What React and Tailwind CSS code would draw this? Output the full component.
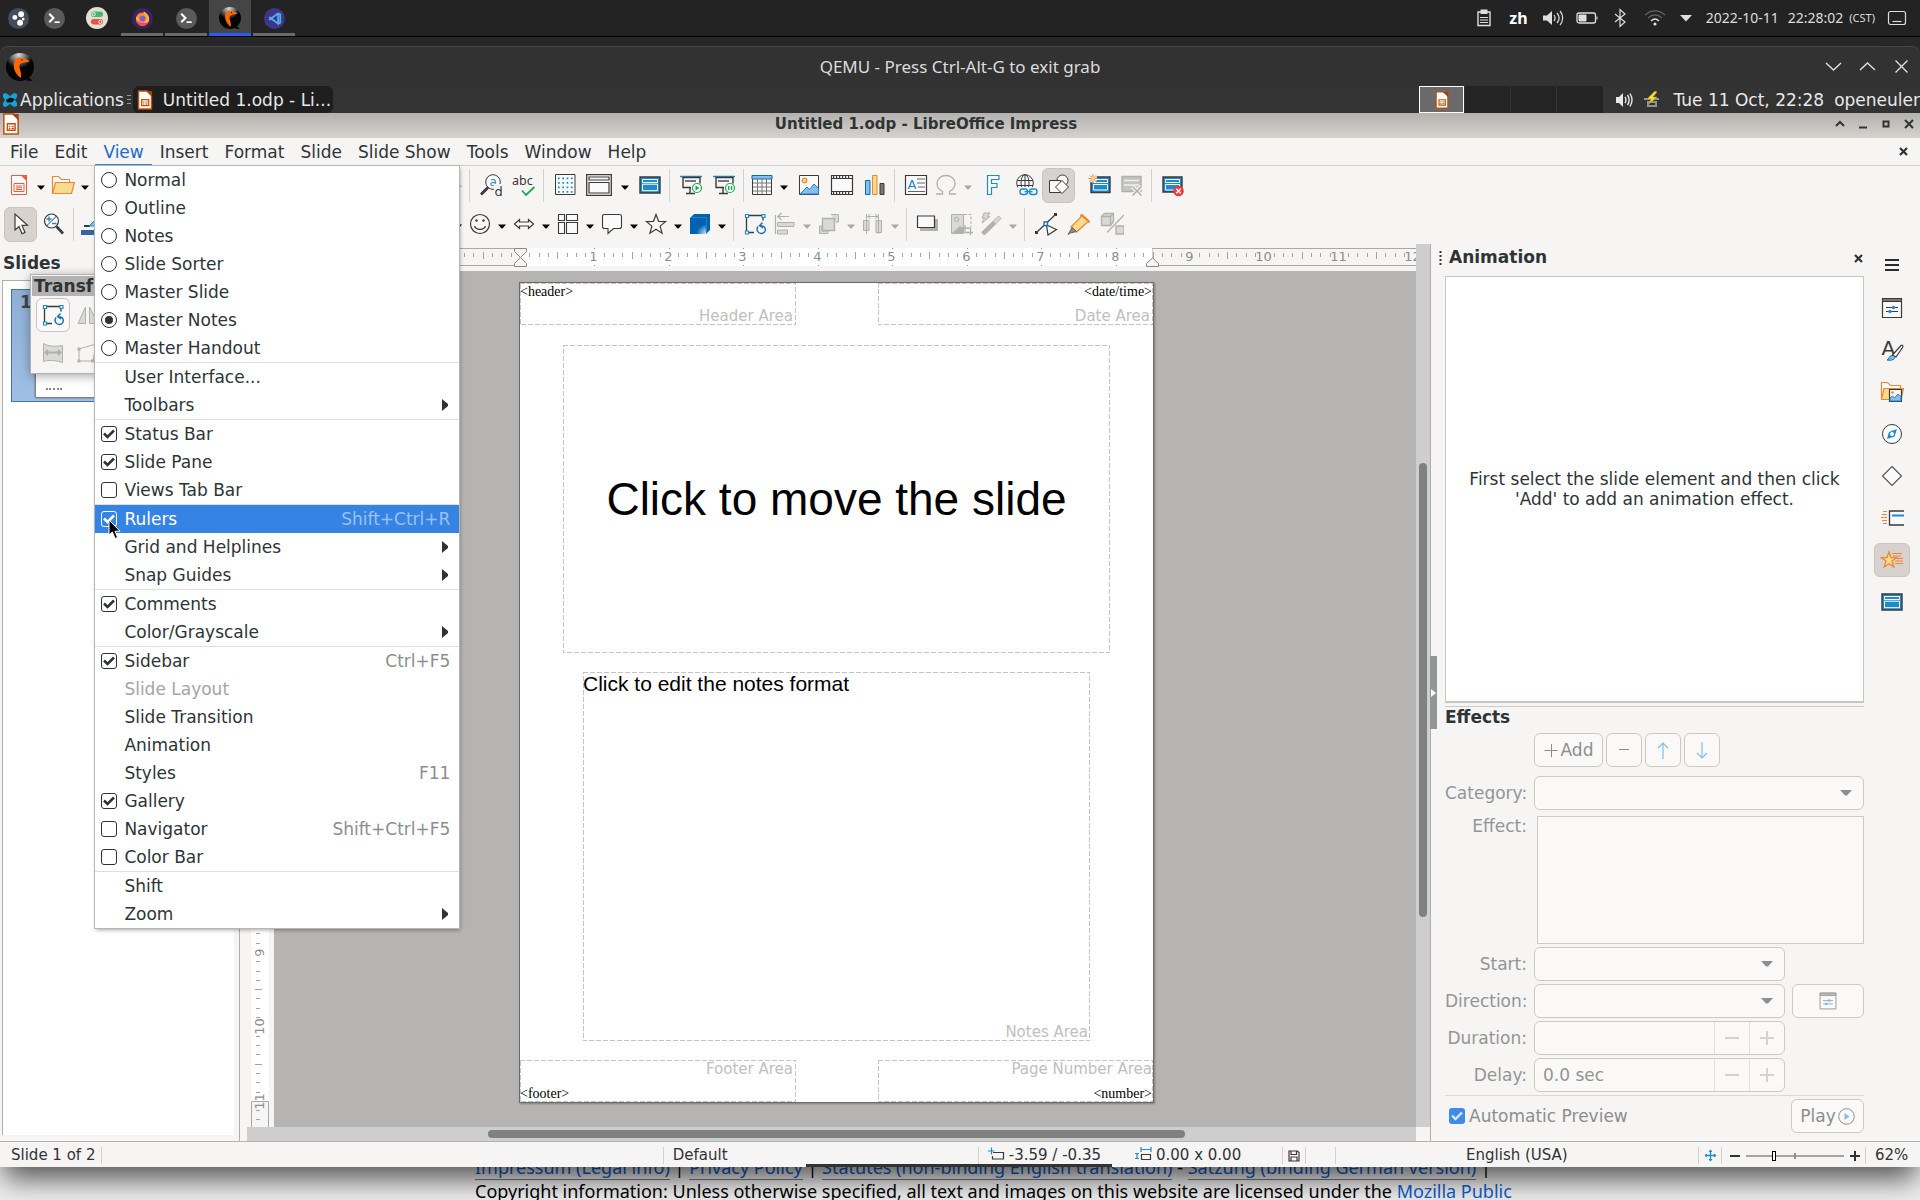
import React from "react";

const D = "#3a3a38";
const B = "#1e8bcd";
const LB = "#83beec";
const OR = "#ed8733";
const YE = "#f8db8f";
const WH = "#fafafa";
const GR = "#b0b0ae";
const LG = "#d9d9d7";
const GN = "#18ab50";

function Icon({ children, size = 24, box = 24, className = "" }) {
  return (
    <svg width={size} height={size} viewBox={`0 0 ${box} ${box}`} fill="none" className={`shrink-0 ${className}`} aria-hidden="true">
      {children}
    </svg>
  );
}

/* ---------- shared glyphs ---------- */

function ImpressDoc({ size = 20 }) {
  return (
    <Icon size={size} box={20}>
      <path d="M3.5 1h9l4 4v14h-13z" fill="#fff" stroke="#c0500c" strokeWidth="1.4" />
      <path d="M11 1h6v6z" fill="#a83f06" />
      <path d="M6.7 9.7h7v6h-7z" stroke="#c0500c" strokeWidth="1.3" />
      <path d="M8 12h1.4M10.4 12h2.2M8 14h1.4M10.4 14h2.2" stroke="#c0500c" />
    </Icon>
  );
}

function QemuLogo({ size }) {
  return (
    <Icon size={size} box={28}>
      <defs>
        <radialGradient id="qemu" cx=".45" cy=".05" r=".5">
          <stop offset="0" stopColor="#ddd" />
          <stop offset=".5" stopColor="#777" />
          <stop offset="1" stopColor="#050505" />
        </radialGradient>
      </defs>
      <circle cx="14" cy="14" r="14" fill="url(#qemu)" />
      <path d="M19 22l8 5.800h-6z" fill="#050505" />
      <path d="M8.500 8C10 4.500 15 4 18.500 5.500c1.500.9 2.200 1.300 4.500 2.200.4.600 0 1.100-1 1.200l-4 .6c-2.500.6-4.500 1.200-4.600 3.600-.2 3 2.400 5.500 1.600 12C10 22 6 15 8.500 8z" fill="#ff6600" />
      <circle cx="16" cy="7" r=".8" fill="#222" />
    </Icon>
  );
}

function Chevron({ color = "#000" }) {
  return (
    <svg width="8" height="5" viewBox="0 0 8 5" aria-hidden="true">
      <path d="M0 .5h8L4.500 4.500h-1z" fill={color} />
    </svg>
  );
}

const TransformShape = () => (
  <>
    <path d="M4 3.500h16v5M3.500 4v16M4 20.500h7" stroke={D} strokeWidth="1.3" />
    <path d="M2.500 2.500h3v3h-3zM19 2.500h3v3h-3zM2.500 19h3v3h-3z" fill="#fff" stroke={B} strokeWidth="1.2" />
    <path d="M15 14.500c-2 2.800-.6 6.800 3 7 3.400.1 5-2.800 4-5.500-.8-1.700-2.300-2.400-5-2.200M19.500 10.500l-3 3.200 3.600 2.300" stroke="#1a6fb5" strokeWidth="1.4" />
  </>
);

const MasterShape = () => (
  <>
    <path d="M2 4h20v16H2z" fill={B} stroke={D} strokeWidth="1.4" />
    <path d="M4.500 6.500h15v3h-15zM4.500 11.200h15v6.500h-15z" stroke="#fff" strokeWidth="1" />
  </>
);

/* ---------- toolbar icons ---------- */

const I = {
  newDoc: (
    <Icon>
      <path d="M4.500 2.500h11l4 4v15h-15z" fill={WH} stroke="#ef5a36" />
      <path d="M13.500 2h6.500v6.500z" fill="#ef5a36" />
      <path d="M7 10.500h10v8H7z" stroke="#ef5a36" />
      <path d="M9 13h6M9 14.800h6M9 16.500h6" stroke="#ef5a36" />
    </Icon>
  ),
  open: (
    <Icon>
      <path d="M1.500 20.500v-17h6l3 3h8v3" fill={WH} stroke={OR} strokeWidth="1.2" />
      <path d="M4.500 9.500h19l-3 11h-19z" fill={YE} stroke={OR} strokeWidth="1.2" />
    </Icon>
  ),
  find: (
    <Icon>
      <circle cx="14" cy="9" r="7.300" fill={WH} stroke={D} strokeWidth="1" />
      <path d="M9 14.500L2 21.500" stroke={D} strokeWidth="2.800" />
      <text x="10.500" y="13" fontSize="12" fontFamily="DejaVu Sans" fill={B}>a</text>
      <rect x="15" y="11" width="9" height="13" fill="#f6f5f4" />
      <text x="15.500" y="22.500" fontSize="13" fontFamily="DejaVu Sans" fill={D}>d</text>
    </Icon>
  ),
  abc: (
    <Icon>
      <text x="0" y="11.500" fontSize="12.500" fontFamily="Noto Sans" fill={D}>abc</text>
      <path d="M10 17.500l4 4.500L22.500 14" stroke={GN} strokeWidth="1.800" />
    </Icon>
  ),
  grid: (
    <Icon>
      <path d="M2.500 1.500h19.500v20H2.500z" fill={WH} stroke={D} />
      {[4.500, 9, 13.500, 18].map((y) => (
        <path key={y} d={`M5 ${y + 0.800}h15`} stroke={B} strokeWidth="1.700" strokeDasharray="1.700 2.600" />
      ))}
    </Icon>
  ),
  view: (
    <Icon size={26} box={26}>
      <path d="M.7 2.700h24.600v20.600H.7z" fill={WH} stroke={D} strokeWidth="1.300" />
      <path d="M3 5h20v3H3zM3 10.500h20V21H3z" stroke={D} strokeWidth="1.200" />
    </Icon>
  ),
  master: <Icon><MasterShape /></Icon>,
  play: (
    <Icon>
      <path d="M1 3.500h22" stroke={B} strokeWidth="1.500" />
      <path d="M12 14.500H4v-10h17v6M11 15v5M7 20.500h9" stroke={D} strokeWidth="1.400" />
      <path d="M6 8h11" stroke="#777" strokeWidth="2" />
      <circle cx="18" cy="15" r="4.500" fill={WH} stroke={GN} strokeWidth="1.200" />
      <path d="M16.500 12.500v5l4-2.500z" fill={GN} />
    </Icon>
  ),
  pause: (
    <Icon>
      <path d="M1 3.500h22" stroke={B} strokeWidth="1.500" />
      <path d="M12 14.500H4v-10h17v6M11 15v5M7 20.500h9" stroke={D} strokeWidth="1.400" />
      <path d="M6 8h11" stroke="#777" strokeWidth="2" />
      <circle cx="18" cy="15" r="4.500" fill={WH} stroke={GN} strokeWidth="1.200" />
      <path d="M16.700 13v4M19.500 13v4" stroke={GN} strokeWidth="1.400" />
    </Icon>
  ),
  table: (
    <Icon>
      <path d="M2.500 2.500h19v19h-19z" fill={WH} stroke={D} />
      <path d="M2 2.500h20v3.500H2z" fill={LB} stroke="#0f6ab4" />
      <path d="M3 10h18M3 14h18M3 18h18M7.500 6v15M12 6v15M16.500 6v15" stroke="#777" />
    </Icon>
  ),
  image: (
    <Icon>
      <path d="M2.500 2.500h19v19h-19z" fill={WH} stroke={D} />
      <circle cx="7.500" cy="7.500" r="2.300" fill={YE} stroke={OR} strokeWidth="1.300" />
      <path d="M3 21l7-7 2.500 2.500L17 11l4.500 4.500V21z" fill={LB} stroke="#2b7fc4" />
    </Icon>
  ),
  media: (
    <Icon>
      <path d="M1.500 2.500h21v19h-21zM1.500 5.500h21M1.500 18.500h21" fill={WH} stroke={D} strokeWidth="1.200" />
      <path d="M3 4h18M3 20h18" stroke={D} strokeWidth="1.800" strokeDasharray="1.200 1.800" />
    </Icon>
  ),
  chart: (
    <Icon>
      <path d="M2.500 7.500h4.500v14H2.500z" fill={LB} stroke="#0f6ab4" />
      <path d="M9.500 2.500h4.500v19H9.500z" fill={YE} stroke={OR} />
      <path d="M17 10.500h4v11h-4z" fill="#797774" stroke={D} />
    </Icon>
  ),
  textbox: (
    <Icon>
      <path d="M1.500 2.500h21v19h-21z" fill={WH} stroke={D} strokeWidth="1.200" />
      <text x="3.500" y="15.500" fontSize="13" fontFamily="DejaVu Sans" fill={B}>A</text>
      <path d="M13 6h8M13 10h8M14 14h7M4 18.500h17" stroke="#666" />
    </Icon>
  ),
  omega: (
    <Icon>
      <path d="M2 21h6.500v-2.500C4.500 16.500 3 13.500 3 10.500 3 6 7 2.500 12 2.500s9 3.500 9 8c0 3-1.500 6-5.500 8V21H22" stroke={GR} strokeWidth="1.300" />
    </Icon>
  ),
  fontwork: (
    <Icon>
      <path d="M6.500 2.500H18v4h-7.500v4H16v4h-5.500v7h-4z" fill={WH} stroke={B} strokeWidth="1.200" />
    </Icon>
  ),
  globe: (
    <Icon>
      <circle cx="11" cy="10" r="8.300" fill={WH} stroke={D} />
      <path d="M3 7.500h16M3 12.500h16M11 2v16" stroke={D} />
      <ellipse cx="11" cy="10" rx="4" ry="8.300" stroke={D} />
      <rect x="4" y="14" width="20" height="10" fill="#f6f5f4" />
      <rect x="6" y="16" width="7.500" height="5.500" rx="2.500" stroke={B} strokeWidth="1.400" />
      <rect x="15.500" y="16" width="7.500" height="5.500" rx="2.500" stroke={B} strokeWidth="1.400" />
      <path d="M10.500 18.700h8" stroke={B} strokeWidth="1.300" />
    </Icon>
  ),
  shapes: (
    <Icon>
      <circle cx="15.500" cy="7.500" r="5.500" fill={WH} stroke={D} />
      <path d="M2.500 7.500h11v12h-11z" fill={WH} stroke={D} />
      <path d="M15 7.500l6.500 6.500-6.500 6.500L8.500 14z" fill={WH} stroke={D} />
    </Icon>
  ),
  newSlide: (
    <Icon>
      <path d="M4 4h19v15.500H4z" fill={B} stroke={D} strokeWidth="1.400" />
      <path d="M6.500 6.500h14v3h-14zM6.500 11.500h14V17h-14z" stroke="#fff" />
      <circle cx="6" cy="5.500" r="4" fill="#f6f5f4" />
      <path d="M6 1v9M1.500 5.500h9M3 2.500l6 6M9 2.500l-6 6" stroke={OR} />
      <circle cx="6" cy="5.500" r="1.600" fill={YE} />
    </Icon>
  ),
  delSlide: (
    <Icon>
      <path d="M2 3.500h19v15H2z" fill="#c4c4c2" stroke={GR} strokeWidth="1.400" />
      <path d="M4 7.500h15M4 12h15" stroke="#eee" strokeWidth="1.300" />
      <path d="M12.500 13.500l9 9M21.500 13.500l-9 9" stroke="#f6f5f4" strokeWidth="4" />
      <path d="M12.500 13.500l9 9M21.500 13.500l-9 9" stroke={GR} strokeWidth="1.600" />
    </Icon>
  ),
  closeMaster: (
    <Icon>
      <path d="M2 4h19v15H2z" fill={B} stroke={D} strokeWidth="1.400" />
      <path d="M4.500 6.500h14v3h-14zM4.500 11.500h14V17h-14z" stroke="#fff" />
      <circle cx="17.500" cy="18" r="5.300" fill="#ed3d3b" />
      <path d="M15.300 15.800l4.400 4.400M19.700 15.800l-4.400 4.400" stroke="#fff" strokeWidth="1.500" />
    </Icon>
  ),
  select: (
    <Icon>
      <path d="M6 2v16l4-3.500 3 7.200 3-1.300-3-7 5.500-.2z" fill="#fff" stroke={D} strokeWidth="1.200" />
    </Icon>
  ),
  zoom: (
    <Icon>
      <circle cx="9.500" cy="9" r="7" fill={WH} stroke={D} strokeWidth="1.200" />
      <path d="M4.500 14L14.500 4" stroke={D} />
      <path d="M4.500 7h5M7 4.500v5M10 11.500h4.500" stroke={B} strokeWidth="1.300" />
      <path d="M14.500 14.500L21 21.500" stroke={D} strokeWidth="2.600" />
    </Icon>
  ),
  line: (
    <Icon>
      <path d="M4 14h6" stroke={D} strokeWidth="2" />
      <path d="M9 14l6-6 6 6z" fill={LB} stroke={B} />
      <path d="M1 18h22v5H1z" fill="#3465a4" />
    </Icon>
  ),
  smiley: (
    <Icon>
      <circle cx="12" cy="12" r="9.500" fill={WH} stroke={D} strokeWidth="1.200" />
      <circle cx="8.500" cy="8.500" r="1.200" fill={D} />
      <circle cx="15.500" cy="8.500" r="1.200" fill={D} />
      <path d="M6.500 14c1.500 4.500 9.500 4.500 11 0" stroke={D} strokeWidth="1.200" />
    </Icon>
  ),
  dblArrow: (
    <Icon>
      <path d="M2.500 12l5-4.500V10h9V7.500l5 4.500-5 4.500V14h-9v2.500z" fill={WH} stroke={D} strokeWidth="1.200" />
    </Icon>
  ),
  flow: (
    <Icon>
      <path d="M2.500 2.500h6v6h-6zM10.500 2.500h11v6h-11zM2.500 10.500h6v11h-6zM10.500 10.500h11v11h-11z" fill={WH} stroke={D} strokeWidth="1.100" />
    </Icon>
  ),
  callout: (
    <Icon>
      <path d="M4.500 2.500h15c1.300 0 2 .7 2 2v10c0 1.300-.7 2-2 2h-6L8 21.500v-5H4.500c-1.300 0-2-.7-2-2v-10c0-1.300.7-2 2-2z" fill={WH} stroke={D} strokeWidth="1.100" />
    </Icon>
  ),
  star: (
    <Icon>
      <path d="M12 2.500l2.600 6.800 7 .3-5.500 4.500 2 7.100L12 17.200l-6.100 4 2-7.100L2.500 9.600l7-.3z" fill={WH} stroke={D} strokeWidth="1.200" />
    </Icon>
  ),
  cube: (
    <Icon>
      <defs>
        <radialGradient id="cubeG" cx="1" cy="1" r=".6">
          <stop offset="0" stopColor="#d6e9f8" />
          <stop offset="1" stopColor="#0063b1" />
        </radialGradient>
      </defs>
      <path d="M6 2h16v16l-4 4H2V6z" fill="#0063b1" />
      <path d="M2 6h16v16H2z" fill="url(#cubeG)" />
      <path d="M2 5.500h16.500V22" stroke="#3b8fd0" strokeWidth=".6" />
    </Icon>
  ),
  transform: <Icon><TransformShape /></Icon>,
  align: (
    <Icon>
      <path d="M2.500 3v19M4 4.500h12M8.500 1L5 4.500 8.500 8" stroke={GR} strokeWidth="1.200" />
      <path d="M4.500 10.500h16.500v4H4.500zM4.500 18h10v4h-10z" fill={LG} stroke={GR} />
    </Icon>
  ),
  arrange: (
    <Icon>
      <path d="M14 2.500h7.500V10H19M2.500 14H5v5h6v2.500H2.500z" fill={LG} stroke={GR} />
      <path d="M5.500 6.500h12v12h-12z" fill={LG} stroke={GR} strokeWidth="1.400" />
    </Icon>
  ),
  distribute: (
    <Icon>
      <path d="M2.500 8.500H8v10H2.500zM15 8.500h5.500v12H15z" fill={LG} stroke={GR} />
      <path d="M5.500 2v20M17.500 2v20M7 4.500h10M9.500 2L6.500 4.500 9.500 7M14 2l3 2.500L14 7" stroke={GR} />
    </Icon>
  ),
  shadow: (
    <Icon>
      <path d="M4 7h18v12H4z" fill={GR} />
      <path d="M1.500 4h17v11.500h-17z" fill={WH} stroke={D} strokeWidth="1.200" />
    </Icon>
  ),
  crop: (
    <Icon>
      <path d="M2.500 2.500h12v19h-12z" fill={LG} stroke={GR} />
      <circle cx="7.500" cy="7.500" r="2.200" stroke={GR} />
      <path d="M3 21l8-7 3 2v5z" fill={GR} />
      <path d="M15 2.500h7V15" stroke={GR} strokeDasharray="3 1.500" />
      <path d="M16 13v7.500h8M13 16h8.500v7" stroke={GR} strokeWidth="1.300" />
    </Icon>
  ),
  filter: (
    <Icon>
      <path d="M3 20.500L19.500 4l2.500 2.500L5.500 23z" fill={LG} stroke={GR} />
      <path d="M2.500 20L14 9l3 3L5 23z" fill={GR} />
      <path d="M5 1h6L8.500 4.500H11L3 11l2.500-5H3z" fill={LG} stroke={GR} />
    </Icon>
  ),
  points: (
    <Icon>
      <path d="M2.500 20.500L21 3" stroke={D} strokeWidth="1.200" />
      <path d="M1 19h3v3H1zM20 1h3v3h-3z" fill={D} />
      <path d="M12.500 13L14 23l8.500-5.500z" fill={WH} stroke={D} strokeWidth="1.200" />
      <path d="M10 10h3.500v3.500H10z" fill="#fff" stroke="#1a6fb5" strokeWidth="1.300" />
    </Icon>
  ),
  glue: (
    <Icon>
      <path d="M14 3l8 7-2.500 1L9.500 20 4 15 13.500 5.500z" fill={YE} stroke={OR} strokeWidth="1.300" />
      <path d="M14.500 2.500l8 7.500" stroke={OR} strokeWidth="2" />
      <path d="M5 15.500l4.500 4-6 1.500L1 22.500 2.500 20z" fill="#8d8b88" stroke="#666" />
    </Icon>
  ),
  extrude: (
    <Icon>
      <path d="M1.500 4.500l3-3h9v8l-3 4h-9z" fill={LG} stroke={GR} strokeWidth="1.300" />
      <path d="M1.500 4.500h9v9M10.500 4.500l3-3" stroke={GR} strokeWidth="1.300" />
      <path d="M7 20.500L24 3" stroke={GR} strokeWidth="1.300" />
      <path d="M16 14h8v8h-8z" fill={LG} stroke={GR} strokeWidth="1.300" />
    </Icon>
  ),
};

/* ---------- toolbar parts ---------- */

function Tool({ icon, label, active, wide }) {
  return (
    <button
      type="button"
      aria-label={label}
      className={`flex h-[35px] shrink-0 items-center justify-center rounded-md ${wide ? "w-9" : "w-[33px]"} ${
        active ? "border border-[#cbc4be] bg-[#d7d2ce]" : ""
      }`}
    >
      {I[icon]}
    </button>
  );
}

function Split({ icon, label, muted, wide }) {
  return (
    <div className="flex shrink-0 items-center">
      <button type="button" aria-label={label} className={`flex h-[35px] items-center justify-center ${wide ? "w-9" : "w-7"}`}>
        {I[icon]}
      </button>
      <Drop label={label + " options"} muted={muted} />
    </div>
  );
}

function Drop({ label, muted }) {
  return (
    <button type="button" aria-label={label} className="flex h-[35px] w-4 shrink-0 items-center justify-center pt-1">
      <Chevron color={muted ? "#a8a8a6" : "#000"} />
    </button>
  );
}

function Sep() {
  return <div className="mx-[3px] h-[33px] w-0.5 shrink-0 border-l border-[#d5d2ce]" />;
}

/* ---------- View menu ---------- */

const MENU = [
  [
    { t: "Normal", k: "radio" },
    { t: "Outline", k: "radio" },
    { t: "Notes", k: "radio" },
    { t: "Slide Sorter", k: "radio" },
    { t: "Master Slide", k: "radio" },
    { t: "Master Notes", k: "radio", on: true },
    { t: "Master Handout", k: "radio" },
  ],
  [{ t: "User Interface..." }, { t: "Toolbars", sub: true }],
  [
    { t: "Status Bar", k: "checkbox", on: true },
    { t: "Slide Pane", k: "checkbox", on: true },
    { t: "Views Tab Bar", k: "checkbox" },
  ],
  [
    { t: "Rulers", k: "checkbox", on: true, acc: "Shift+Ctrl+R", hot: true },
    { t: "Grid and Helplines", sub: true },
    { t: "Snap Guides", sub: true },
  ],
  [{ t: "Comments", k: "checkbox", on: true }, { t: "Color/Grayscale", sub: true }],
  [
    { t: "Sidebar", k: "checkbox", on: true, acc: "Ctrl+F5" },
    { t: "Slide Layout", off: true },
    { t: "Slide Transition" },
    { t: "Animation" },
    { t: "Styles", acc: "F11" },
    { t: "Gallery", k: "checkbox", on: true },
    { t: "Navigator", k: "checkbox", acc: "Shift+Ctrl+F5" },
    { t: "Color Bar", k: "checkbox" },
  ],
  [{ t: "Shift" }, { t: "Zoom", sub: true }],
];

function MenuRow({ item }) {
  const { t, k, on, acc, sub, off, hot } = item;
  const tail = (
    <>
      {acc && <span className={`ml-auto ${hot ? "text-[#9ac1f1]" : "text-[#8b8e8f]"}`}>{acc}</span>}
      {sub && (
        <svg width="6" height="12" viewBox="0 0 6 12" className="ml-auto mr-0.5" aria-hidden="true">
          <path d="M0 0v12l6-5V5z" fill="#2e3436" />
        </svg>
      )}
    </>
  );
  if (!k) {
    return (
      <button type="button" disabled={off} className={`flex h-7 w-full items-center pr-[9px] pl-[29px] text-left ${off ? "text-[#a3a5a6]" : ""}`}>
        {t}
        {tail}
      </button>
    );
  }
  return (
    <label className={`relative flex h-7 items-center gap-[7px] pr-[9px] pl-1.5 ${hot ? "bg-[#3584e4] text-white" : ""}`}>
      <span className="grid size-4 place-items-center">
        <input
          type={k}
          name={k === "radio" ? "view-mode" : t}
          defaultChecked={!!on}
          className={`col-start-1 row-start-1 size-4 appearance-none border ${k === "radio" ? "rounded-full" : "rounded-[3px]"} ${
            hot ? "border-white" : "border-[#2e3436]"
          }`}
        />
        {on && (
          <svg width="16" height="16" viewBox="0 0 16 16" fill="none" className="pointer-events-none col-start-1 row-start-1" aria-hidden="true">
            {k === "radio" ? (
              <circle cx="8" cy="8" r="4" fill="#2e3436" />
            ) : (
              <path d="M3 7.500l3.500 3.500L13 4.500" stroke={hot ? "#fff" : "#2e3436"} strokeWidth="2.600" />
            )}
          </svg>
        )}
      </span>
      {t}
      {tail}
      {hot && (
        <svg width="14" height="21" viewBox="0 0 14 21" className="absolute top-3.5 left-[13px]" aria-hidden="true">
          <path d="M1 1v15l3.400-3 2.600 6.500 2.600-1L7 12.200h5z" fill="#000" stroke="#fff" strokeWidth="1" />
        </svg>
      )}
    </label>
  );
}

function ViewMenu() {
  return (
    <div className="absolute top-full left-0 z-30 w-[364px] bg-white text-[#2e3436] shadow-[0_0_0_1px_#b9b7b4,1px_2px_4px_rgba(0,0,0,0.35)]">
      {MENU.map((group, i) => (
        <div key={i} className={i ? "border-t border-[#dfdfdf]" : ""}>
          {group.map((m) => (
            <MenuRow key={m.t} item={m} />
          ))}
        </div>
      ))}
    </div>
  );
}

/* ---------- rulers ---------- */

const INCH = 74.44;

function HRuler() {
  const zero = 250;
  const end = zero + 632;
  const marks = [];
  for (let i = -24; i <= 98; i++) {
    if (i === 0) continue;
    const x = Math.round(zero + (i * INCH) / 8) + 0.5;
    if (i % 8 === 0) {
      marks.push(
        <text key={i} x={x - 1} y="12.500" textAnchor="middle" fontSize="13" fill="#8b8e8f" fontFamily="DejaVu Sans">
          {Math.abs(i / 8)}
        </text>
      );
      marks.push(<path key={"d" + i} d={`M${x} 0v1M${x} 17v1`} stroke="#999" />);
    } else if (i % 4 === 0) marks.push(<path key={i} d={`M${x} 4v7`} stroke="#a3a5a5" />);
    else marks.push(<path key={i} d={`M${x} 5v4`} stroke="#a3a5a5" />);
  }
  return (
    <svg height="20" className="mt-1 block w-full overflow-hidden" fill="none" aria-label="Horizontal ruler">
      <path d={`M0 .5h${zero}v17H0M1600 .5H${end}v17H1600`} stroke="#aaa9a6" fill="#f6f5f4" />
      <rect x={zero} y="0" width={end - zero} height="18" fill="#fff" />
      {marks}
      <path d="M244.500.5h12v3l-6 6-6-6zM250.500 9.500l6 6v3h-12v-3z" fill="#f6f5f4" stroke="#888a88" />
      <path d="M882.500 10l6 5.500v3h-12v-3z" fill="#f6f5f4" stroke="#888a88" />
    </svg>
  );
}

function VRuler() {
  const zero = 12;
  const end = zero + 818;
  const marks = [];
  for (let i = 1; i <= 90; i++) {
    const y = Math.round(zero + (i * INCH) / 8) - 0.5;
    if (i % 8 === 0)
      marks.push(
        <text key={i} transform={`translate(13 ${y}) rotate(-90)`} textAnchor="middle" fontSize="13" fill="#8b8e8f" fontFamily="DejaVu Sans">
          {i / 8}
        </text>
      );
    else if (i % 4 === 0) marks.push(<path key={i} d={`M4 ${y}h7`} stroke="#a3a5a5" />);
    else marks.push(<path key={i} d={`M5 ${y}h4`} stroke="#a3a5a5" />);
  }
  return (
    <svg width="18" className="block h-full overflow-hidden" fill="none" aria-label="Vertical ruler">
      <rect x="0" y={zero} width="18" height={end - zero} fill="#fff" />
      <path d={`M.5 900V${end + 0.500}h17V900M.5-1V${zero}h17V-1`} stroke="#aaa9a6" />
      {marks}
    </svg>
  );
}

/* ---------- page canvas ---------- */

const FRAME = "absolute flex text-[15px] leading-4 text-[#c0c0c0]";
const FIELD = "absolute font-['Liberation_Serif',serif] text-sm leading-4 text-black";

function Dashes() {
  return (
    <svg className="absolute inset-0 size-full" fill="none" aria-hidden="true">
      <rect x="0" y="0" width="100%" height="100%" stroke="#c4c4c4" strokeWidth="2" strokeDasharray="5 2" />
    </svg>
  );
}

function NotesPage() {
  return (
    <div className="absolute top-3 left-[246px] h-[819px] w-[633px] bg-white shadow-[0_0_0_1px_#6b6b69,1px_1px_2px_1px_#7e7e7c]">
      <div className={`${FRAME} top-0 left-0 h-[42px] w-[276px] items-end justify-end pr-[3px] pb-px`}>
        <Dashes />
        <span className={`${FIELD} top-px left-0`}>&lt;header&gt;</span>
        Header Area
      </div>
      <div className={`${FRAME} top-0 right-0 h-[42px] w-[275px] items-end justify-end pr-[3px] pb-px`}>
        <Dashes />
        <span className={`${FIELD} top-px right-px`}>&lt;date/time&gt;</span>
        Date Area
      </div>
      <div className={`${FRAME} top-[62px] left-[43px] h-[308px] w-[547px] items-center justify-center`}>
        <Dashes />
        <span className="font-['Liberation_Sans',sans-serif] text-[46px] leading-none text-black">Click to move the slide</span>
      </div>
      <div className={`${FRAME} top-[389px] left-[63px] h-[369px] w-[507px] items-end justify-end pr-0.5 pb-px`}>
        <Dashes />
        <span className="absolute top-0 left-0 font-['Liberation_Sans',sans-serif] text-[21px] leading-6 text-black">
          Click to edit the notes format
        </span>
        Notes Area
      </div>
      <div className={`${FRAME} bottom-0 left-0 h-[42px] w-[276px] items-start justify-end pt-px pr-[3px]`}>
        <Dashes />
        <span className={`${FIELD} bottom-0 left-0`}>&lt;footer&gt;</span>
        Footer Area
      </div>
      <div className={`${FRAME} right-0 bottom-0 h-[42px] w-[275px] items-start justify-end pt-px pr-px`}>
        <Dashes />
        <span className={`${FIELD} right-px bottom-0`}>&lt;number&gt;</span>
        Page Number Area
      </div>
    </div>
  );
}

/* ---------- left pane ---------- */

function SlidePane() {
  return (
    <aside className="relative flex w-60 shrink-0 flex-col border-r border-[#b0aeab] pb-1.5">
      <h2 className="flex h-9 items-center px-[3px] pt-0.5 font-bold">Slides</h2>
      <div className="mr-[5px] ml-0.5 flex-1 border-t border-l border-[#b0aeab] bg-white pt-2 pl-2">
        <div className="flex h-[113px] w-[216px] items-end gap-1 border border-[#4473a8] bg-linear-to-b from-[#8eafd5] to-[#9fc0e6] pr-3 pb-1 pl-2">
          <span className="h-full pt-0.5 font-bold text-[#444]">1</span>
          <div className="flex h-24 flex-1 items-end bg-white p-2 shadow-[0_0_2px_1px_#666]">
            <div className="mb-[-1px] ml-0.5 w-4 border-t-2 border-dotted border-[#888]" />
          </div>
        </div>
      </div>
      <div className="absolute top-[30px] left-[30px] z-10 w-[170px] border border-[#b3b1ae] bg-[#f6f5f4] p-px shadow-[0_2px_10px_rgba(0,0,0,0.35)]">
        <div className="h-5 overflow-hidden bg-[#b5b3b1] px-0.5 font-bold leading-5">Transformations</div>
        <div className="grid grid-cols-[34px_34px_34px] gap-x-px gap-y-1 px-1 py-0.5">
          <button type="button" aria-label="Rotate" className="flex size-[34px] items-center justify-center rounded-md border border-[#cbc4be] bg-[#faf9f8]">
            {I.transform}
          </button>
          <button type="button" aria-label="Flip" className="flex size-[34px] items-center justify-center">
            <Icon>
              <path d="M2 20.500L9.500 4v16.500zM22 20.500L13.500 4v16.500z" fill={LG} stroke={GR} />
            </Icon>
          </button>
          <span />
          <button type="button" aria-label="In 3D" className="flex size-[34px] items-center justify-center">
            <Icon>
              <path d="M2.500 2.500c6 3.500 12 3 19 2v17c-7-2-13-3-19-1z" fill={LG} stroke={GR} />
              <path d="M5 11.500h14M7 9l-2.500 2.500L7 14M17 9l2.500 2.500L17 14" stroke={GR} strokeWidth="2" />
            </Icon>
          </button>
          <button type="button" aria-label="Distort" className="flex size-[34px] items-center justify-center">
            <Icon>
              <path d="M3 8l17-5-3 17H3z" stroke={GR} />
              <path d="M1.500 6.500h3v3h-3zM18.500 1.500h3v3h-3zM1.500 18.500h3v3h-3zM15 18.500h3v3h-3z" fill={GR} />
            </Icon>
          </button>
        </div>
      </div>
    </aside>
  );
}

/* ---------- sidebar ---------- */

const CTRL = "h-[34px] rounded-md border border-[#cdc9c3] bg-[#faf9f8]";

function Select({ id, className = "" }) {
  return (
    <div className={`grid ${className}`}>
      <select id={id} disabled className={`${CTRL} col-start-1 row-start-1 w-full appearance-none opacity-100`} />
      <svg width="12" height="6" viewBox="0 0 12 6" className="pointer-events-none col-start-1 row-start-1 mr-3 self-center justify-self-end" aria-hidden="true">
        <path d="M0 0h12L7 5.500H5z" fill="#8b8e8f" />
      </svg>
    </div>
  );
}

function Spin({ id, value }) {
  const plus = "M0 7h14";
  return (
    <div className={`${CTRL} flex w-[251px] overflow-hidden`}>
      <input id={id} type="text" disabled defaultValue={value} className="min-w-0 flex-1 bg-transparent px-2 text-[#929595]" />
      {["Decrease", "Increase"].map((n) => (
        <button key={n} type="button" disabled aria-label={`${n} ${id}`} className="flex w-[35px] items-center justify-center border-l border-[#e3e1de]">
          <svg width="14" height="14" viewBox="0 0 14 14" aria-hidden="true">
            <path d={n === "Increase" ? plus + "M7 0v14" : plus} stroke="#d3d3d1" strokeWidth="2" />
          </svg>
        </button>
      ))}
    </div>
  );
}

function SlidersIcon({ muted, size = 24 }) {
  const c = muted ? "#9c9c9a" : D;
  return (
    <Icon size={size}>
      <path d="M2.500 2.500h19v19h-19z" fill={WH} stroke={c} strokeWidth="1.200" />
      <path d="M2.500 2.500h19v3h-19z" fill={muted ? "#b5b5b3" : "#777774"} stroke={c} />
      <path d="M6 11.500h12M6 15.500h12" stroke={c} />
      <circle cx="13.500" cy="11.500" r="1.700" fill={muted ? LB : B} />
      <circle cx="10" cy="15.500" r="1.700" fill={muted ? LB : B} />
    </Icon>
  );
}

const ARROW = {
  up: "M8 17V1M3 6l5-5 5 5",
  down: "M8 0v16M3 11l5 5 5-5",
};

function FormRow({ id, label, top, children }) {
  return (
    <div className={`flex gap-[7px] ${top ? "items-start" : "items-center"}`}>
      <label htmlFor={id} className="w-[82px] shrink-0 text-right text-[#929595]">
        {label}
      </label>
      {children}
    </div>
  );
}

function AnimationDeck() {
  return (
    <section className="flex min-w-0 flex-1 flex-col pr-px pb-2 pl-3.5">
      <div className="-ml-1.5 flex h-8 shrink-0 items-center">
        <svg width="3" height="16" className="mt-[-3px]" aria-hidden="true">
          <path d="M1.500 0v16" stroke="#2e3436" strokeWidth="2" strokeDasharray="2 2" />
        </svg>
        <h2 className="ml-[7px] pb-1.5 font-bold">Animation</h2>
        <button type="button" aria-label="Close Sidebar Deck" className="mr-px mb-1 ml-auto">
          <svg width="9" height="9" viewBox="0 0 9 9" aria-hidden="true">
            <path d="M1 1l7 7M8 1L1 8" stroke="#2e3436" strokeWidth="2.200" />
          </svg>
        </button>
      </div>
      <div className="flex min-h-0 flex-1 items-center justify-center border border-b-2 border-[#c9c6c1] bg-white px-4 text-center leading-5">
        <p>
          First select the slide element and then click
          <br />
          'Add' to add an animation effect.
        </p>
      </div>
      <div className="mt-[3px] border-t border-[#cdc9c3]" />
      <h3 className="h-5 leading-5 font-bold">Effects</h3>
      <div className="mt-1.5 ml-[89px] flex gap-[3px] text-[#8b8e8f]">
        <button type="button" disabled className={`${CTRL} flex w-[69px] items-center justify-center gap-[3px]`}>
          <svg width="14" height="14" viewBox="0 0 14 14" aria-hidden="true">
            <path d="M.5 7.500h13M7.500 1v13" stroke="#8b8e8f" />
          </svg>
          Add
        </button>
        <button type="button" disabled aria-label="Remove Effect" className={`${CTRL} flex w-9 items-center justify-center`}>
          <svg width="10" height="2" aria-hidden="true">
            <path d="M0 .5h10" stroke="#8b8e8f" />
          </svg>
        </button>
        {["up", "down"].map((d) => (
          <button key={d} type="button" disabled aria-label={`Move ${d}`} className={`${CTRL} flex w-9 items-center justify-center`}>
            <svg width="16" height="17" viewBox="0 0 16 17" fill="none" aria-hidden="true">
              <path d={ARROW[d]} stroke="#83beec" strokeWidth="1.200" />
            </svg>
          </button>
        ))}
      </div>
      <div className="mt-[9px]">
        <FormRow id="category" label="Category:">
          <Select id="category" className="flex-1" />
        </FormRow>
      </div>
      <div className="mt-1.5">
        <FormRow id="effect" label="Effect:" top>
          <select id="effect" size={5} disabled className="ml-[3px] h-32 min-w-0 flex-1 border border-[#cdc9c3] bg-[#faf9f8] opacity-100" />
        </FormRow>
      </div>
      <div className="mt-[3px] flex flex-col gap-[3px] border-b border-[#dcd9d6] pb-[3px]">
        <FormRow id="start" label="Start:">
          <Select id="start" className="w-[251px]" />
        </FormRow>
        <FormRow id="direction" label="Direction:">
          <Select id="direction" className="w-[251px]" />
          <button type="button" disabled aria-label="Options" className={`${CTRL} flex flex-1 items-center justify-center`}>
            <SlidersIcon muted size={20} />
          </button>
        </FormRow>
        <FormRow id="duration" label="Duration:">
          <Spin id="duration" value="" />
        </FormRow>
        <FormRow id="delay" label="Delay:">
          <Spin id="delay" value="0.0 sec" />
        </FormRow>
      </div>
      <div className="mt-[3px] flex items-center justify-between text-[#8b8e8f]">
        <label className="flex items-center gap-1 pl-1">
          <span className="grid size-4">
            <input type="checkbox" defaultChecked disabled className="col-start-1 row-start-1 size-4 appearance-none rounded-[3px] bg-[#3f8be8]" />
            <svg width="16" height="16" viewBox="0 0 16 16" fill="none" className="pointer-events-none col-start-1 row-start-1" aria-hidden="true">
              <path d="M3 7.500l3.500 3.500L13 4.500" stroke="#d9e7fa" strokeWidth="2.400" />
            </svg>
          </span>
          Automatic Preview
        </label>
        <button type="button" disabled className={`${CTRL} flex w-[73px] items-center justify-center gap-0.5`}>
          Play
          <svg width="17" height="17" viewBox="0 0 17 17" fill="none" aria-hidden="true">
            <circle cx="8.500" cy="8.500" r="7.800" stroke="#8b8e8f" />
            <path d="M6.500 5v7l5-3.500z" fill="#83beec" />
          </svg>
        </button>
      </div>
    </section>
  );
}

const TABS = [
  ["Sidebar Settings", (
    <Icon>
      <path d="M5 6h14M5 11h14M5 16h14" stroke="#2b2b2b" strokeWidth="2.200" />
    </Icon>
  )],
  ["Properties", <SlidersIcon />],
  ["Styles", (
    <Icon>
      <text x="1.500" y="17" fontSize="20" fontFamily="DejaVu Sans" fill={D}>A</text>
      <path d="M12.500 17L21 7.500c1.500-1 2.500.5 1.500 2L16 19z" fill={WH} stroke={D} strokeWidth="1.200" />
      <path d="M7 22c2 0 1.500-4 5-4.500 2-.3 3.500 1.500 2.500 3-1 1.800-5 2-7.500 1.500z" fill={LB} stroke="#0f6ab4" />
    </Icon>
  )],
  ["Gallery", (
    <Icon>
      <path d="M1.500 19V2.500h6l3 3h10V8" fill={WH} stroke={OR} strokeWidth="1.200" />
      <path d="M4 8.500h19.500L21 19.500H1.500z" fill={YE} stroke={OR} strokeWidth="1.200" />
      <path d="M9.500 9.500h12v12h-12z" fill={WH} stroke={D} strokeWidth="1.200" />
      <circle cx="12.500" cy="12.500" r="1.300" fill={OR} />
      <path d="M10 21v-3l2.500-2 2 2 3.500-4 3 2.500V21z" fill={LB} stroke="#2b7fc4" />
    </Icon>
  )],
  ["Navigator", (
    <Icon>
      <circle cx="12" cy="12" r="9.500" fill={WH} stroke={D} />
      <path d="M17 7l-2.500 7.500L7 17l2-7z" fill={B} />
      <circle cx="12" cy="12" r="2" fill="#fff" />
    </Icon>
  )],
  ["Shapes", (
    <Icon>
      <path d="M12 2.500l9.500 9.500-9.500 9.500L2.500 12z" fill={WH} stroke="#555" strokeWidth="1.200" />
    </Icon>
  )],
  ["Slide Transition", (
    <Icon>
      <path d="M24 5h-14.500v14H24" fill={WH} stroke={D} strokeWidth="1.300" />
      <path d="M12 9.500h12" stroke={B} strokeWidth="2" />
      <path d="M3 5.500h4M2 8.500h5M1 11.500h6M2 14.500h5M3 17.500h4" stroke={OR} />
    </Icon>
  )],
  ["Animation", (
    <Icon>
      <path d="M9 4l2 5.500 5.500.2-4.500 3.400L13.800 19 9 15.700 4.200 19 6 13.100 1.500 9.700 7 9.500z" fill={YE} stroke={OR} strokeWidth="1.300" />
      <path d="M12 5.500h10M13 8h8M16.500 10.500H23M15 13h8M15 15.500h8" stroke={OR} />
    </Icon>
  )],
  ["Master Slides", <Icon><MasterShape /></Icon>],
];

function Sidebar() {
  return (
    <aside className="relative flex w-[490px] shrink-0 border-l border-[#b0aeab]">
      <button type="button" aria-label="Hide sidebar" className="absolute top-[412px] -left-px flex h-[73px] w-[7px] items-center bg-[#929696] pt-0">
        <svg width="6" height="8" viewBox="0 0 6 8" aria-hidden="true">
          <path d="M1 0l5 4-5 4z" fill="#fff" />
        </svg>
      </button>
      <AnimationDeck />
      <nav className="flex w-[55px] shrink-0 flex-col items-center gap-2 pt-[5px] pr-0.5">
        {TABS.map(([name, icon], i) => (
          <button
            key={name + i}
            type="button"
            aria-label={name}
            className={`flex h-[34px] w-9 items-center justify-center rounded-md ${i === 7 ? "border border-[#cbc4be] bg-[#d7d2ce]" : ""}`}
          >
            {icon}
          </button>
        ))}
      </nav>
    </aside>
  );
}

/* ---------- host desktop panel ---------- */

const TASKS = [
  { n: "Firefox", w: "border-[#6b6b6b]", el: (
    <Icon size={21} box={20}>
      <circle cx="10" cy="10" r="10" fill="#3b2361" />
      <circle cx="10" cy="10.500" r="6.300" fill="#ff8a2a" />
      <path d="M4 8c0 6 3 9 6 9s6.500-3 6.300-7.500C15.500 6 13 4 11 3c0 3 3 4 3 7a4 4 0 01-8 0z" fill="#ffbd3f" />
      <path d="M4 11c.5 4 3 6 6 6 2.500 0 5-2 6-4-3 2-9 2-12-2z" fill="#f4485f" />
      <circle cx="10" cy="10" r="2.700" fill="#7a5cf0" />
    </Icon>
  ) },
  { n: "Terminal", w: "border-[#6b6b6b]", el: <Term /> },
  { n: "QEMU", w: "border-[#2f5cf0] bg-[#454545]", el: <QemuLogo size={22} /> },
  { n: "Code", w: "border-[#6b6b6b]", el: (
    <Icon size={21} box={20}>
      <circle cx="10" cy="10" r="10" fill="#3d348b" />
      <path d="M13.500 5v10L5 8.500M13.500 5L5 11.500M13.500 5l2 1v8l-2 1" stroke="#55aee8" strokeWidth="1.700" />
    </Icon>
  ) },
];

function Term() {
  return (
    <Icon size={21} box={20}>
      <circle cx="10" cy="10" r="10" fill="#5a5a5a" />
      <path d="M5 5.500l4 4-4 4" stroke="#fff" strokeWidth="2" />
      <path d="M10 13.500h5" stroke="#fff" strokeWidth="1.600" />
    </Icon>
  );
}

function HostPanel() {
  return (
    <header className="flex h-9 shrink-0 items-stretch bg-[#232323] font-['Noto_Sans',sans-serif] text-[#dedede]">
      <button type="button" aria-label="Launcher" className="flex w-9 items-center justify-center">
        <Icon size={21} box={20}>
          <circle cx="10" cy="10" r="10" fill="#454d5c" />
          <circle cx="6.500" cy="9" r="2.300" fill="#fff" />
          <circle cx="12.500" cy="6" r="2.800" fill="#fff" />
          <circle cx="11.500" cy="14" r="2.800" fill="#fff" />
          <circle cx="14.500" cy="10.500" r="1.300" fill="#fff" />
        </Icon>
      </button>
      <button type="button" aria-label="Terminal" className="flex w-9 items-center justify-center">
        <Term />
      </button>
      <button type="button" aria-label="Settings" className="flex w-[49px] items-center justify-center">
        <Icon size={22} box={20}>
          <circle cx="10" cy="10" r="10" fill="#e4e0d0" />
          <rect x="4.500" y="4" width="11" height="5" rx="2.500" fill="#42b86a" />
          <rect x="4.500" y="11" width="11" height="5" rx="2.500" fill="#e8504e" />
          <circle cx="6.900" cy="6.500" r="1.500" stroke="#fff" strokeWidth=".8" />
          <circle cx="13" cy="13.500" r="1.500" stroke="#fff" strokeWidth=".8" />
        </Icon>
      </button>
      <div className="flex gap-0.5">
        {TASKS.map((t) => (
          <button key={t.n} type="button" aria-label={t.n} className={`flex w-[42px] items-center justify-center border-b-[3px] pt-[3px] ${t.w}`}>
            {t.el}
          </button>
        ))}
      </div>
      <div className="ml-auto flex items-center pr-[13px] text-sm">
        <Icon size={20} box={20} className="mr-[15px]">
          <path d="M4 4h12v13.500H4z" stroke="#dedede" strokeWidth="1.400" />
          <path d="M6.500 1.500h7V6h-7z" fill="#dedede" />
          <path d="M6 9.500h8M6 12h8M6 14.500h8" stroke="#dedede" />
        </Icon>
        <span className="mr-3.5 text-base font-bold text-white">zh</span>
        <Icon size={22} box={22} className="mr-3">
          <path d="M1 8.500h4l5-4.500v14L5 13.500H1z" fill="#dedede" />
          <path d="M12 8c1.500 2 1.500 4 0 6M15 6c2.500 3 2.500 7 0 10M18 4c3.500 4 3.500 10 0 14" stroke="#dedede" strokeWidth="1.200" />
        </Icon>
        <Icon size={22} box={22} className="mr-3">
          <rect x="1" y="6" width="18.500" height="10" rx="2" stroke="#dedede" strokeWidth="1.300" />
          <path d="M3 8h7v6H3zM21 9.500v3" fill="#dedede" stroke="#dedede" />
        </Icon>
        <Icon size={20} box={20} className="mr-3.5">
          <path d="M5 6l10 8-5 4.500v-17L15 6 5 14" stroke="#dedede" strokeWidth="1.200" />
        </Icon>
        <Icon size={22} box={22} className="mr-3.5">
          <path d="M1 8c6-5.500 14-5.500 20 0M4 11c4.500-4 9.500-4 14 0" stroke="#666" strokeWidth="1.200" />
          <path d="M7 14c2.500-2.500 5.500-2.500 8 0" stroke="#dedede" strokeWidth="1.300" />
          <circle cx="11" cy="17" r="1.600" fill="#dedede" />
        </Icon>
        <svg width="12" height="7" viewBox="0 0 12 7" className="mr-3.5" aria-hidden="true">
          <path d="M0 0h12L6 6.500z" fill="#dedede" />
        </svg>
        <span className="mr-[9px]">2022-10-11</span>
        <span className="mr-1.5">22:28:02</span>
        <span className="mr-3 text-[11px]">(CST)</span>
        <Icon size={20} box={20}>
          <rect x="1.500" y="3.500" width="17" height="13" rx="2" stroke="#dedede" strokeWidth="1.200" />
          <path d="M5.500 13.500h9" stroke="#dedede" strokeWidth="1.200" />
        </Icon>
      </div>
    </header>
  );
}

function GuestPanel() {
  return (
    <div className="flex h-[27px] shrink-0 items-stretch bg-[#333] text-[#e8e8e8]">
      <button type="button" className="flex items-center gap-0.5 pl-0.5">
        <Icon size={16} box={16}>
          <path d="M1 2l3-1 4 3 4-3 3 1v3l-2 3 2 3v3l-3 1-4-3-4 3-3-1v-3l2-3-2-3z" fill="#15a3d6" />
          <path d="M4 8l4-2.500 5 1.500-3 3.500H5z" fill="#111" />
        </Icon>
        Applications
      </button>
      <svg width="4" height="10" viewBox="0 0 4 10" className="mr-0.5 ml-[3px] self-center" aria-hidden="true">
        <path d="M0 .5h4M0 4.500h4M0 8.500h4" stroke="#999" />
      </svg>
      <button type="button" className="flex w-[200px] items-center gap-2 rounded-md bg-[#1e1e1e] pl-0.5">
        <ImpressDoc size={20} />
        <span className="whitespace-nowrap">Untitled 1.odp - Li...</span>
      </button>
      <div className="ml-auto flex gap-px">
        <div className="flex w-[45px] items-center justify-center border border-white bg-[#6a6a6a]">
          <ImpressDoc size={18} />
        </div>
        <div className="w-[45px] bg-[#242424]" />
        <div className="w-[45px] bg-[#242424]" />
        <div className="w-[46px] bg-[#242424]" />
      </div>
      <div className="flex items-center">
        <Icon size={18} box={18} className="mr-2.5 ml-3">
          <path d="M1 6h3l4-4v14l-4-4H1z" fill="#e8e8e8" />
          <path d="M10 6c1.300 2 1.300 4 0 6M12.500 4c2 3 2 7 0 10M15 2.500c2.500 4 2.500 9 0 13" stroke="#e8e8e8" strokeWidth="1.400" />
        </Icon>
        <Icon size={18} box={18} className="mr-3">
          <path d="M1 8h15M5 11h8v4H5z" stroke="#8d9494" strokeWidth="2" />
          <path d="M12 0L4 8h4l-2 5 8-7h-4l4-5z" fill="#f7dc3a" stroke="#b58d10" strokeWidth=".6" />
        </Icon>
        <span className="mr-2.5">Tue 11 Oct, 22:28</span>
        <span className="whitespace-nowrap">openeuler</span>
      </div>
    </div>
  );
}

/* ---------- status bar ---------- */

function StatusBar() {
  const cell = "flex items-center border-r border-[#d5d2ce]";
  return (
    <footer className="flex h-[26px] shrink-0 items-stretch border-t border-[#b5b3b0] pt-[5px] pb-[3px] text-[15px] leading-none">
      <div className={`${cell} w-[102px] pl-[11px]`}>Slide 1 of 2</div>
      <div className={`${cell} flex-[562]`} />
      <div className={`${cell} w-[315px] pl-[9px]`}>Default</div>
      <div className={`${cell} w-[304px]`}>
        <Icon size={17} box={17} className="ml-[9px]">
          <path d="M5 5.500h10.500v6.500h-11V9" stroke={D} strokeWidth="1.200" />
          <path d="M0 4h6.500M3.500.5v7" stroke={B} strokeWidth="1.200" />
        </Icon>
        <span className="ml-1">-3.59 / -0.35</span>
        <Icon size={17} box={17} className="ml-[34px]">
          <path d="M6.500 7.500h9v5h-9z" stroke={D} strokeWidth="1.200" />
          <path d="M5.500 2.500h11M6 0v5M16 0v5M0 6.500h4M2 6.500v5M0 11.500h4" stroke={B} strokeWidth="1.200" />
        </Icon>
        <span className="ml-1">0.00 x 0.00</span>
      </div>
      <div className={`${cell} w-[23px] justify-center`}>
        <Icon size={12} box={12}>
          <path d="M1 1h8.500L11 2.500V11H1zM3 1v3.500h5.500V1M3 11V7h6v4" stroke={D} strokeWidth="1.200" />
        </Icon>
      </div>
      <div className={`${cell} w-[30px]`} />
      <div className={`${cell} flex-[363] justify-center`}>English (USA)</div>
      <div className={`${cell} w-[23px] justify-center`}>
        <Icon size={13} box={13}>
          <path d="M6.500 1v11M1 6.500h11" stroke={B} strokeWidth="1.300" />
          <path d="M4.500 3l2-2.500 2 2.500zM4.500 10l2 2.500 2-2.500zM3 4.500L.5 6.500 3 8.500zM10 4.500l2.500 2-2.500 2z" fill={B} />
        </Icon>
      </div>
      <div className={`${cell} w-36 gap-1.5 pl-2`}>
        <button type="button" aria-label="Zoom out">
          <svg width="10" height="10" viewBox="0 0 10 10" aria-hidden="true"><path d="M0 5h10" stroke="#2e3436" strokeWidth="2" /></svg>
        </button>
        <div className="grid w-[98px] items-center">
          <div className="col-start-1 row-start-1 h-0.5 bg-[#a5a5a3]" />
          <div className="col-start-1 row-start-1 h-1.5 w-0.5 justify-self-center bg-[#8f8f8d]" />
          <input
            type="range"
            aria-label="Zoom"
            min="0"
            max="100"
            defaultValue="28"
            className="col-start-1 row-start-1 h-3 w-full appearance-none bg-transparent [&::-webkit-slider-thumb]:h-[10px] [&::-webkit-slider-thumb]:w-1 [&::-webkit-slider-thumb]:appearance-none [&::-webkit-slider-thumb]:border [&::-webkit-slider-thumb]:border-black [&::-webkit-slider-thumb]:bg-white"
          />
        </div>
        <button type="button" aria-label="Zoom in">
          <svg width="10" height="10" viewBox="0 0 10 10" aria-hidden="true"><path d="M0 5h10M5 0v10" stroke="#2e3436" strokeWidth="2" /></svg>
        </button>
      </div>
      <div className="flex w-[54px] items-center pl-[9px]">62%</div>
    </footer>
  );
}

/* ---------- web page behind the window ---------- */

function PageFooter() {
  return (
    <div className="h-[33px] shrink-0 overflow-hidden bg-[#eee] pl-[475px] font-['Noto_Sans',sans-serif] text-lg leading-6 text-black">
      <div className="-mt-3 whitespace-nowrap [&_a]:text-[#0c5fd0]">
        <p className="[&_a]:border-b [&_a]:border-[#777]">
          <a href="#impressum">Impressum (Legal info)</a> | <a href="#privacy">Privacy Policy</a> |{" "}
          <a href="#statutes">Statutes (non-binding English translation)</a> -{" "}
          <a href="#satzung">Satzung (binding German version)</a> |
        </p>
        <p>
          Copyright information: Unless otherwise specified, all text and images on this website are licensed under the{" "}
          <a href="#mpl">Mozilla Public</a>
        </p>
      </div>
    </div>
  );
}

/* ---------- app ---------- */

const MENUS = ["File", "Edit", "View", "Insert", "Format", "Slide", "Slide Show", "Tools", "Window", "Help"];

function MenuBar() {
  return (
    <nav className="flex h-7 shrink-0 border-b border-[#d5d2ce] pl-0.5">
      {MENUS.map((m) => (
        <div key={m} className="relative -mb-px">
          <button type="button" className={`h-7 px-2 ${m === "View" ? "border-b-2 border-[#3584e4] pt-0.5 text-[#1b6acb]" : ""}`}>
            {m}
          </button>
          {m === "View" && <ViewMenu />}
        </div>
      ))}
      <button type="button" aria-label="Close Document" className="mr-3 ml-auto">
        <svg width="9" height="9" viewBox="0 0 9 9" aria-hidden="true"><path d="M1 1l7 7M8 1L1 8" stroke="#2e3436" strokeWidth="2.200" /></svg>
      </button>
    </nav>
  );
}

export default function App() {
  return (
    <div className="flex h-screen min-h-[900px] flex-col overflow-hidden bg-[#2a2a2a] font-['DejaVu_Sans',sans-serif] text-[17px] leading-5 text-[#2e3436]">
      <HostPanel />
      <div className="h-2.5 shrink-0 border-t border-black bg-[#292929]" />

      <div className="relative z-10 flex min-h-0 flex-1 flex-col rounded-t-lg bg-[#323232] shadow-[0_16px_28px_-4px_rgba(0,0,0,0.65)]">
        <div className="grid h-10 shrink-0 grid-cols-[1fr_auto_1fr] items-center rounded-t-lg border-t border-[#464646] px-1.5 font-['Noto_Sans',sans-serif] text-[17px] text-[#dcdcdc]">
          <QemuLogo size={28} />
          <h1>QEMU - Press Ctrl-Alt-G to exit grab</h1>
          <div className="flex items-center gap-[17px] justify-self-end pr-1">
            {["M1 5l7.500 7L16 5", "M1 12l7.500-7L16 12", "M2.500 2.500l12 12M14.500 2.500l-12 12"].map((d, i) => (
              <button key={d} type="button" aria-label={["Minimize", "Maximize", "Close"][i]}>
                <svg width="17" height="17" viewBox="0 0 17 17" fill="none" aria-hidden="true"><path d={d} stroke="#e0e0e0" strokeWidth="1.400" /></svg>
              </button>
            ))}
          </div>
        </div>
        <GuestPanel />

        <div className="flex min-h-0 flex-1 flex-col bg-[#f6f5f4]">
          <div className="grid h-[25px] shrink-0 grid-cols-[1fr_auto_1fr] items-center bg-linear-to-b from-[#b4b2ae] to-[#d6d2ce] pr-1.5 pb-1 text-[15px] font-bold">
            <ImpressDoc size={22} />
            <span className="mr-[62px]">Untitled 1.odp - LibreOffice Impress</span>
            <div className="flex items-center gap-[13px] justify-self-end">
              {["M1 7l4-4 4 4", "M1 8.500h8", "M2.500 2.500h5v5h-5z", "M1 1l8 8M9 1L1 9"].map((d, i) => (
                <button key={d} type="button" aria-label={["Shade", "Minimize window", "Maximize window", "Close window"][i]}>
                  <svg width="10" height="10" viewBox="0 0 10 10" fill="none" className="block" aria-hidden="true"><path d={d} stroke="#2e3436" strokeWidth="2" /></svg>
                </button>
              ))}
            </div>
          </div>

          <MenuBar />

          <div className="flex h-[38px] shrink-0 items-center pl-[5px]">
            <Split icon="newDoc" label="New" />
            <Split icon="open" label="Open" />
            <div className="w-[357px] shrink-0" />
            <Drop label="Redo options" muted />
            <Sep />
            <Tool icon="find" label="Find and Replace" />
            <Tool icon="abc" label="Spelling" />
            <Sep />
            <Tool icon="grid" label="Display Grid" />
            <Split icon="view" label="Display Views" wide />
            <Tool icon="master" label="Master Slide" />
            <Sep />
            <Tool icon="play" label="Start from First Slide" />
            <Tool icon="pause" label="Start from Current Slide" />
            <Sep />
            <Split icon="table" label="Table" />
            <Tool icon="image" label="Insert Image" />
            <Tool icon="media" label="Insert Audio or Video" />
            <Tool icon="chart" label="Insert Chart" />
            <Sep />
            <Tool icon="textbox" label="Insert Text Box" />
            <Split icon="omega" label="Special Character" muted />
            <Tool icon="fontwork" label="Fontwork" />
            <Tool icon="globe" label="Hyperlink" />
            <Tool icon="shapes" label="Show Draw Functions" active />
            <div className="w-[7px] shrink-0" />
            <Tool icon="newSlide" label="New Master" />
            <Tool icon="delSlide" label="Delete Master" />
            <Sep />
            <Tool icon="closeMaster" label="Close Master View" />
          </div>
          <div className="flex h-10 shrink-0 items-center pl-1">
            <Tool icon="select" label="Select" active />
            <Tool icon="zoom" label="Zoom and Pan" />
            <Sep />
            <div className="flex w-7 shrink-0 justify-center">{I.line}</div>
            <div className="w-[344px] shrink-0" />
            <Drop label="Basic shape options" />
            <Split icon="smiley" label="Symbol Shapes" />
            <Split icon="dblArrow" label="Block Arrows" />
            <Split icon="flow" label="Flowchart" />
            <Split icon="callout" label="Callouts" />
            <Split icon="star" label="Stars and Banners" />
            <Split icon="cube" label="3D Objects" />
            <Sep />
            <Tool icon="transform" label="Rotate" />
            <Split icon="align" label="Align Objects" muted />
            <Split icon="arrange" label="Arrange" muted />
            <Split icon="distribute" label="Distribute" muted />
            <Sep />
            <Tool icon="shadow" label="Shadow" />
            <Tool icon="crop" label="Crop Image" />
            <Split icon="filter" label="Filter" muted />
            <Sep />
            <Tool icon="points" label="Edit Points" />
            <Tool icon="glue" label="Gluepoints" />
            <Tool icon="extrude" label="Toggle Extrusion" />
          </div>

          <div className="flex min-h-0 flex-1">
            <SlidePane />
            <main className="flex min-w-0 flex-1 flex-col pl-[7px]">
              <div className="flex min-h-0 flex-1">
                <div className="flex min-w-0 flex-1 flex-col">
                  <div className="h-[27px] shrink-0 overflow-hidden pl-[23px]">
                    <HRuler />
                  </div>
                  <div className="flex min-h-0 flex-1 pl-1">
                    <VRuler />
                    <div className="relative ml-[5px] min-w-0 flex-1 overflow-hidden bg-[#b5b4b2]">
                      <NotesPage />
                    </div>
                  </div>
                </div>
                <div className="w-3.5 shrink-0 bg-[#cecece] pt-[219px]">
                  <div className="mx-auto h-[454px] w-2 rounded-full bg-[#7d8281]" />
                </div>
              </div>
              <div className="mr-3.5 h-3.5 shrink-0 bg-[#cecece] pt-[3px] pl-[241px]">
                <div className="h-2 w-[697px] rounded-full bg-[#7d8281]" />
              </div>
            </main>
            <Sidebar />
          </div>
          <StatusBar />
        </div>
        <div className="absolute bottom-0 left-[42%] h-[3px] w-[306px] bg-[#333]" />
      </div>

      <PageFooter />
    </div>
  );
}
